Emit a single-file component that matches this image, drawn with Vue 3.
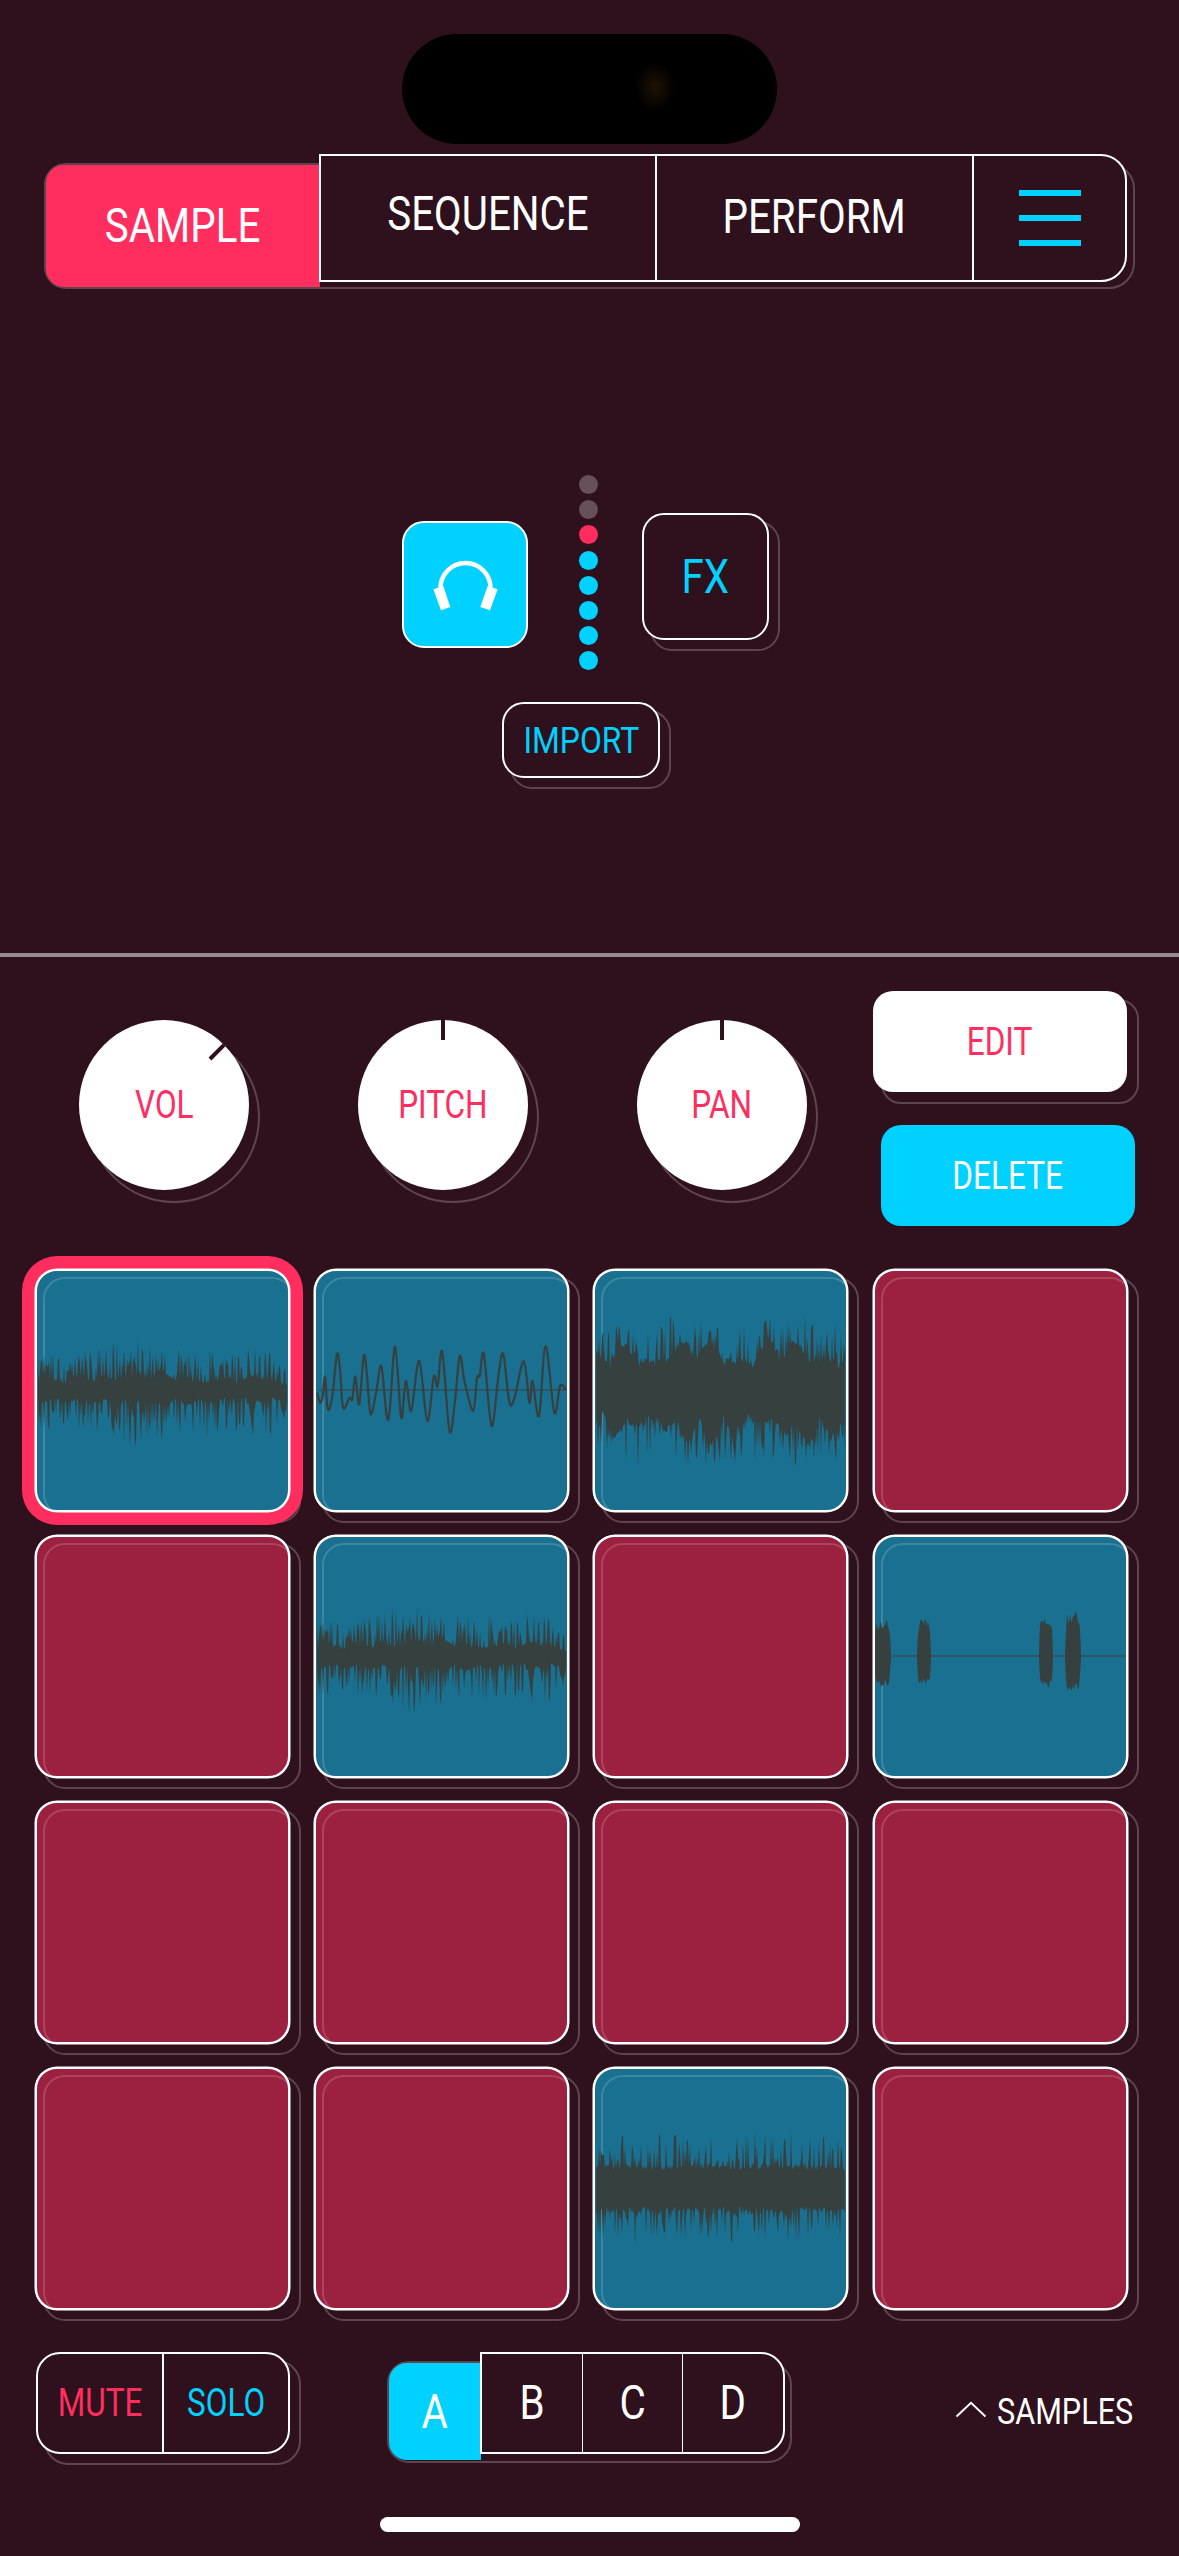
<script setup>
function rng(seed) {
  let s = seed;
  return () => {
    s = (s + 0x6d2b79f5) | 0;
    let t = Math.imul(s ^ (s >>> 15), 1 | s);
    t = (t + Math.imul(t ^ (t >>> 7), 61 | t)) ^ t;
    return ((t ^ (t >>> 14)) >>> 0) / 4294967296;
  };
}

function envAt(env, f) {
  const p = f * (env.length - 1);
  const i = Math.min(Math.floor(p), env.length - 2);
  return env[i] + (env[i + 1] - env[i]) * (p - i);
}

function dense({ seed, x0 = 3, x1 = 252, coreUp, coreDown, spikeUp, spikeDown, chance, shoulder = 0, env }) {
  const r = rng(seed);
  const top = [];
  const bot = [];
  const cy = 121;
  const pa = r() * 6, pb = r() * 6, pc = r() * 6, pd = r() * 6;
  for (let x = x0; x <= x1; x += 1) {
    const e = envAt(env, (x - x0) / (x1 - x0));
    const su = Math.abs(Math.sin(x * 0.11 + pa) * Math.sin(x * 0.037 + pb));
    const sd = Math.abs(Math.sin(x * 0.13 + pc) * Math.sin(x * 0.029 + pd));
    let u = coreUp * e * (0.85 + r() * 0.3) + su * shoulder * e;
    let d = coreDown * e * (0.85 + r() * 0.3) + sd * shoulder * e;
    if (r() < chance) u += Math.pow(r(), 0.85) * (spikeUp - coreUp - su * shoulder) * e;
    if (r() < chance) d += Math.pow(r(), 1.2) * (spikeDown - coreDown - sd * shoulder) * e;
    top.push(`${x} ${(cy - u).toFixed(1)}`);
    bot.unshift(`${x} ${(cy + d).toFixed(1)}`);
  }
  return `M${top.join('L')}L${bot.join('L')}Z`;
}

function burst(x0, x1, up, down, seed) {
  const r = rng(seed);
  const top = [];
  const bot = [];
  for (let x = x0; x <= x1; x += 1) {
    const f = (x - x0) / (x1 - x0);
    const shape = Math.min(1, Math.sin(Math.PI * f) * 3 + 0.1);
    top.push(`${x} ${(121 - up * shape * (0.72 + r() * 0.34)).toFixed(1)}`);
    bot.unshift(`${x} ${(121 + down * shape * (0.76 + r() * 0.3)).toFixed(1)}`);
  }
  return `M${top.join('L')}L${bot.join('L')}Z`;
}

function smooth(points) {
  let d = `M${points[0][0].toFixed(1)} ${points[0][1].toFixed(1)}`;
  for (let i = 0; i < points.length - 1; i += 1) {
    const p0 = points[Math.max(i - 1, 0)];
    const p1 = points[i];
    const p2 = points[i + 1];
    const p3 = points[Math.min(i + 2, points.length - 1)];
    const c1x = p1[0] + (p2[0] - p0[0]) / 6;
    const c1y = p1[1] + (p2[1] - p0[1]) / 6;
    const c2x = p2[0] - (p3[0] - p1[0]) / 6;
    const c2y = p2[1] - (p3[1] - p1[1]) / 6;
    d += `C${c1x.toFixed(1)} ${c1y.toFixed(1)} ${c2x.toFixed(1)} ${c2y.toFixed(1)} ${p2[0].toFixed(1)} ${p2[1].toFixed(1)}`;
  }
  return d;
}

const peaks = [
  [830,460],[838,490],[845,470],[851,412],[858,510],[870,470],[882,345],[890,390],[898,505],[915,475],
  [922,480],[930,412],[940,495],[952,350],[960,400],[970,525],[985,455],[998,380],[1012,530],[1020,510],
  [1034,322],[1050,535],[1062,425],[1076,515],[1097,365],[1118,545],[1135,412],[1145,440],[1157,337],
  [1176,575],[1190,490],[1203,350],[1216,430],[1238,515],[1248,415],[1255,410],[1266,345],[1286,560],
  [1305,400],[1317,345],[1332,485],[1345,480],[1370,365],[1385,490],[1393,425],[1410,530],[1427,320],
  [1450,520],[1465,440],[1480,450]
];
const linePath = smooth(peaks.map(([x, y]) => [x / 2.613 - 314.6, 121 + (y - 452) / 3]));

const wave1 = dense({
  seed: 11, coreUp: 9, coreDown: 9, spikeUp: 46, spikeDown: 52, chance: 0.6, shoulder: 6,
  env: [0.9, 0.85, 0.8, 0.85, 1.05, 1.1, 1.15, 1, 1, 0.95, 0.9, 0.95, 0.8, 0.95, 0.95, 0.55]
});

const wave3 = dense({
  seed: 29, coreUp: 26, coreDown: 27, spikeUp: 72, spikeDown: 76, chance: 0.45, shoulder: 24,
  env: [0.75, 0.95, 1, 1, 1.05, 1.05, 1, 1, 1, 1, 1, 1, 0.9]
});

const wave15 = dense({
  seed: 47, coreUp: 20, coreDown: 21, spikeUp: 54, spikeDown: 56, chance: 0.42, shoulder: 2,
  env: [1, 1, 1, 1, 1, 1, 1]
});

const burstPath = [
  burst(1, 18, 34, 30, 3),
  burst(44, 58, 36, 29, 5),
  burst(166, 180, 39, 30, 7),
  burst(192, 208, 43, 33, 9)
].join('');

const navTabs = [
  { label: 'SEQUENCE', width: 336, cls: 'lift-lg' },
  { label: 'PERFORM', width: 317, cls: 'lift-sm' }
];
const knobs = [
  { label: 'VOL', angle: 45 },
  { label: 'PITCH', angle: 0 },
  { label: 'PAN', angle: 0 }
];
const levels = ['off', 'off', 'hot', 'on', 'on', 'on', 'on', 'on'];
const banks = ['B', 'C', 'D'];

const pads = [
  { on: true, selected: true, fill: wave1 },
  { on: true, line: linePath, center: [3, 252] },
  { on: true, fill: wave3 },
  { on: false },
  { on: false },
  { on: true, fill: wave1 },
  { on: false },
  { on: true, fill: burstPath, center: [17, 252] },
  { on: false }, { on: false }, { on: false }, { on: false },
  { on: false }, { on: false },
  { on: true, fill: wave15 },
  { on: false }
];
</script>

<template>
  <div class="app">
    <div class="island"><span class="lens"></span></div>

    <nav class="seg nav">
      <span class="seg-shadow nav-shadow"></span>
      <div class="seg-active nav-active"><span class="t t-lg">SAMPLE</span></div>
      <div class="seg-front nav-front">
        <div v-for="tab in navTabs" :key="tab.label" class="nav-cell" :class="tab.cls" :style="{ width: tab.width + 'px' }">
          <span class="t t-lg">{{ tab.label }}</span>
        </div>
        <div class="nav-menu">
          <i></i><i></i><i></i>
        </div>
      </div>
    </nav>

    <section class="monitor">
      <button class="phones">
        <svg width="124" height="125" viewBox="0 0 124 125">
          <path d="M36.5 65 A25 25 0 0 1 86.5 65" fill="none" stroke="#fff" stroke-width="4.5" />
          <path d="M29.3 66.3 L39.3 63 L46.3 84 L37 87.3 Z" fill="#fff" />
          <path d="M93.7 66.3 L83.7 63 L76.3 84 L86 87.3 Z" fill="#fff" />
        </svg>
      </button>
      <div class="meter">
        <i v-for="(level, i) in levels" :key="i" :class="level"></i>
      </div>
      <button class="box fx"><span class="t t-lg cyan">FX</span></button>
    </section>

    <button class="box import"><span class="t t-md cyan">IMPORT</span></button>

    <div class="rule"></div>

    <section class="controls">
      <div v-for="knob in knobs" :key="knob.label" class="knob">
        <span class="knob-ring"></span>
        <span class="knob-face">
          <span class="t t-md pink">{{ knob.label }}</span>
          <span class="tick" :style="{ transform: `rotate(${knob.angle}deg)` }"></span>
        </span>
      </div>
      <div class="actions">
        <button class="edit"><span class="t t-md pink">EDIT</span></button>
        <button class="delete"><span class="t t-md white">DELETE</span></button>
      </div>
    </section>

    <section class="pads">
      <div v-for="(pad, i) in pads" :key="i" class="pad" :class="{ on: pad.on, selected: pad.selected }">
        <div class="pad-clip">
          <span class="pad-line"></span>
          <svg v-if="pad.on" class="wave" viewBox="0 0 251 239" width="251" height="239">
            <line v-if="pad.center" :x1="pad.center[0]" :x2="pad.center[1]" y1="119" y2="119" stroke="#2a5668" stroke-width="2" />
            <g transform="translate(-2 -2)">
              <path v-if="pad.fill" :d="pad.fill" fill="#36403f" />
              <path v-if="pad.line" :d="pad.line" fill="none" stroke="#36403f" stroke-width="2.2" stroke-linejoin="round" />
            </g>
          </svg>
        </div>
      </div>
    </section>

    <footer class="footer">
      <div class="box mute">
        <div class="mute-cell"><span class="t t-md pink">MUTE</span></div>
        <div class="mute-cell solo"><span class="t t-md cyan">SOLO</span></div>
      </div>

      <div class="seg bank">
        <span class="seg-shadow bank-shadow"></span>
        <div class="seg-active bank-active"><span class="t t-lg white">A</span></div>
        <div class="seg-front bank-front">
          <div v-for="b in banks" :key="b" class="bank-cell"><span class="t t-lg white">{{ b }}</span></div>
        </div>
      </div>

      <div class="samples">
        <svg width="32" height="17" viewBox="0 0 32 17">
          <path d="M1.5 15.5 L16 1.8 L30.5 15.5" fill="none" stroke="#fff" stroke-width="2" />
        </svg>
        <span class="samples-label">SAMPLES</span>
      </div>
    </footer>

    <div class="home"></div>
  </div>
</template>

<style>
html, body { margin: 0; background: #2f111d; }
</style>

<style scoped>
* { box-sizing: border-box; }
button { padding: 0; margin: 0; font: inherit; }

.app {
  isolation: isolate;
  position: relative;
  width: 1179px;
  height: 2556px;
  overflow: hidden;
  background: #2f111d;
  color: #fff;
  font-family: Roboto, "Liberation Sans", sans-serif;
  padding-top: 34px;
}

.t { display: inline-block; white-space: nowrap; transform: scaleX(.83); line-height: 1; }
.t-lg { font-size: 48px; transform: scaleX(.84); }
.t-md { font-size: 38px; }
.pink { color: #ff2e5f; }
.cyan { color: #00d1ff; }
.white { color: #fff; }

.island {
  position: relative;
  width: 375px;
  height: 110px;
  margin-left: 402px;
  border-radius: 55px;
  background: #000;
}
.lens {
  position: absolute;
  left: 233px;
  top: 28px;
  width: 40px;
  height: 50px;
  background: radial-gradient(closest-side, #1e1203, rgba(30, 18, 3, 0));
}

.seg { position: relative; display: flex; align-items: flex-start; }
.seg-shadow {
  position: absolute;
  left: 0;
  bottom: 0;
  border: 2px solid #5d4550;
  z-index: -1;
}
.seg-active { display: flex; align-items: center; justify-content: center; margin-left: 2px; }
.seg-front { display: flex; background: #2f111d; border: 2px solid #fff; margin-left: -1px; }

.nav { width: 1091px; height: 135px; margin: 10px 0 0 44px; }
.nav-shadow { top: 9px; right: 0; border-radius: 22px 26px 26px 22px; }
.nav-active {
  width: 274px;
  height: 122px;
  margin-top: 11px;
  background: #ff2e5f;
  border-radius: 18px 0 0 18px;
}
.nav-front { width: 808px; height: 128px; border-radius: 0 26px 26px 0; }
.nav-cell {
  display: flex;
  align-items: center;
  justify-content: center;
  border-right: 2px solid #fff;
}
.lift-lg { padding-bottom: 8px; }
.lift-sm { padding-bottom: 2px; }
.nav-menu {
  flex: 1;
  display: flex;
  flex-direction: column;
  align-items: center;
  justify-content: center;
  gap: 19px;
}
.nav-menu i { display: block; width: 62px; height: 6px; background: #00d1ff; }

.monitor {
  display: flex;
  align-items: flex-start;
  margin: 186px 0 0 402px;
  height: 195px;
}
.phones {
  width: 126px;
  height: 127px;
  margin-top: 46px;
  background: #00d1ff;
  border: 2px solid #fff;
  border-radius: 22px;
}
.phones svg { display: block; }
.meter {
  display: flex;
  flex-direction: column;
  gap: 6.2px;
  margin-left: 51px;
}
.meter i { display: block; width: 19px; height: 19px; border-radius: 50%; }
.meter .off { background: #66505a; }
.meter .hot { background: #ff2e5f; }
.meter .on { background: #00d1ff; }

.box {
  position: relative;
  background: #2f111d;
  border: 2px solid #fff;
  display: flex;
  align-items: center;
  justify-content: center;
}
.box::before {
  content: "";
  position: absolute;
  left: 6px;
  top: 6px;
  width: calc(100% + 3px);
  height: calc(100% + 3px);
  border: 2px solid #5d4550;
  border-radius: inherit;
  z-index: -1;
}
.fx {
  width: 127px;
  height: 127px;
  margin: 38px 0 0 44px;
  border-radius: 22px;
}
.import {
  width: 158px;
  height: 76px;
  margin: 32px 0 0 502px;
  border-radius: 22px;
}
.import .t { font-size: 37px; transform: scaleX(.86); }

.rule { height: 4px; margin-top: 175px; background: #9a8a92; }

.controls {
  display: flex;
  align-items: flex-start;
  margin-top: 34px;
  padding-left: 79px;
  height: 235px;
}
.knob {
  position: relative;
  width: 170px;
  height: 170px;
  margin: 29px 109px 0 0;
}
.knob:nth-child(3) { margin-right: 66px; }
.knob-ring {
  position: absolute;
  left: 9px;
  top: 11px;
  width: 172px;
  height: 172px;
  border: 2px solid #5d4550;
  border-radius: 50%;
}
.knob-face {
  position: absolute;
  inset: 0;
  display: flex;
  align-items: center;
  justify-content: center;
  background: #fff;
  border-radius: 50%;
}
.tick {
  position: absolute;
  left: 83px;
  top: 0;
  width: 4px;
  height: 20px;
  background: #2f111d;
  transform-origin: 2px 85px;
}

.actions { display: flex; flex-direction: column; }
.edit {
  position: relative;
  width: 254px;
  height: 101px;
  border: 0;
  border-radius: 20px;
  background: #fff;
}
.edit::before {
  content: "";
  position: absolute;
  left: 8px;
  top: 8px;
  width: 100%;
  height: 100%;
  border: 2px solid #5d4550;
  border-radius: inherit;
  z-index: -1;
}
.delete {
  width: 254px;
  height: 101px;
  margin: 33px 0 0 8px;
  border: 0;
  border-radius: 20px;
  background: #00d1ff;
}

.pads {
  display: grid;
  grid-template-columns: repeat(4, 255px);
  grid-auto-rows: 243px;
  column-gap: 24.2px;
  row-gap: 23px;
  margin-top: 43px;
  padding-left: 35px;
}
.pad {
  position: relative;
  border: 2px solid #fff;
  border-radius: 22px;
  background: #9c2140;
  box-shadow: 0 0 0 .5px #fff;
}
.pad.on { background: #1a7090; }
.pad::before {
  content: "";
  position: absolute;
  left: 6px;
  top: 6px;
  width: calc(100% + 3px);
  height: calc(100% + 3px);
  border: 2px solid #5d4550;
  border-radius: 22px;
  z-index: -1;
}
.pad.selected { box-shadow: 0 0 0 .5px #fff, 0 0 0 13px #ff2e5f; }
.pad-clip {
  position: absolute;
  inset: 0;
  overflow: hidden;
  border-radius: 20px;
}
.pad-line {
  position: absolute;
  left: 6px;
  top: 6px;
  width: 100%;
  height: 100%;
  border: 2px solid rgba(255, 255, 255, .16);
  border-radius: 22px;
}
.wave { position: absolute; left: 0; top: 0; }

.footer {
  display: flex;
  align-items: flex-start;
  margin-top: 42px;
  padding-left: 36px;
  height: 111px;
}
.mute {
  width: 254px;
  height: 102px;
  border-radius: 24px;
}
.mute-cell {
  flex: 1;
  height: 100%;
  display: flex;
  align-items: center;
  justify-content: center;
}
.mute-cell.solo { border-left: 2px solid #fff; }

.bank { width: 405px; height: 111px; margin-left: 97px; }
.bank-shadow { top: 9px; right: 0; border-radius: 22px 24px 24px 22px; }
.bank-active {
  width: 92px;
  height: 97px;
  margin-top: 11px;
  background: #00d1ff;
  border-radius: 18px 0 0 18px;
}
.bank-front {
  width: 305px;
  height: 102px;
  border-radius: 0 24px 24px 0;
}
.bank-cell {
  flex: 1;
  display: flex;
  align-items: center;
  justify-content: center;
}
.bank-cell + .bank-cell { border-left: 1px solid #fff; }

.samples {
  display: flex;
  align-items: center;
  gap: 10px;
  height: 40px;
  margin: 40px 0 0 163px;
}
.samples svg { margin-top: -6px; }
.samples-label {
  display: inline-block;
  font-size: 36px;
  line-height: 1;
  white-space: nowrap;
  transform: scaleX(.85);
  transform-origin: left center;
}

.home {
  width: 420px;
  height: 15px;
  margin: 54px 0 0 380px;
  border-radius: 8px;
  background: #fff;
}
</style>
